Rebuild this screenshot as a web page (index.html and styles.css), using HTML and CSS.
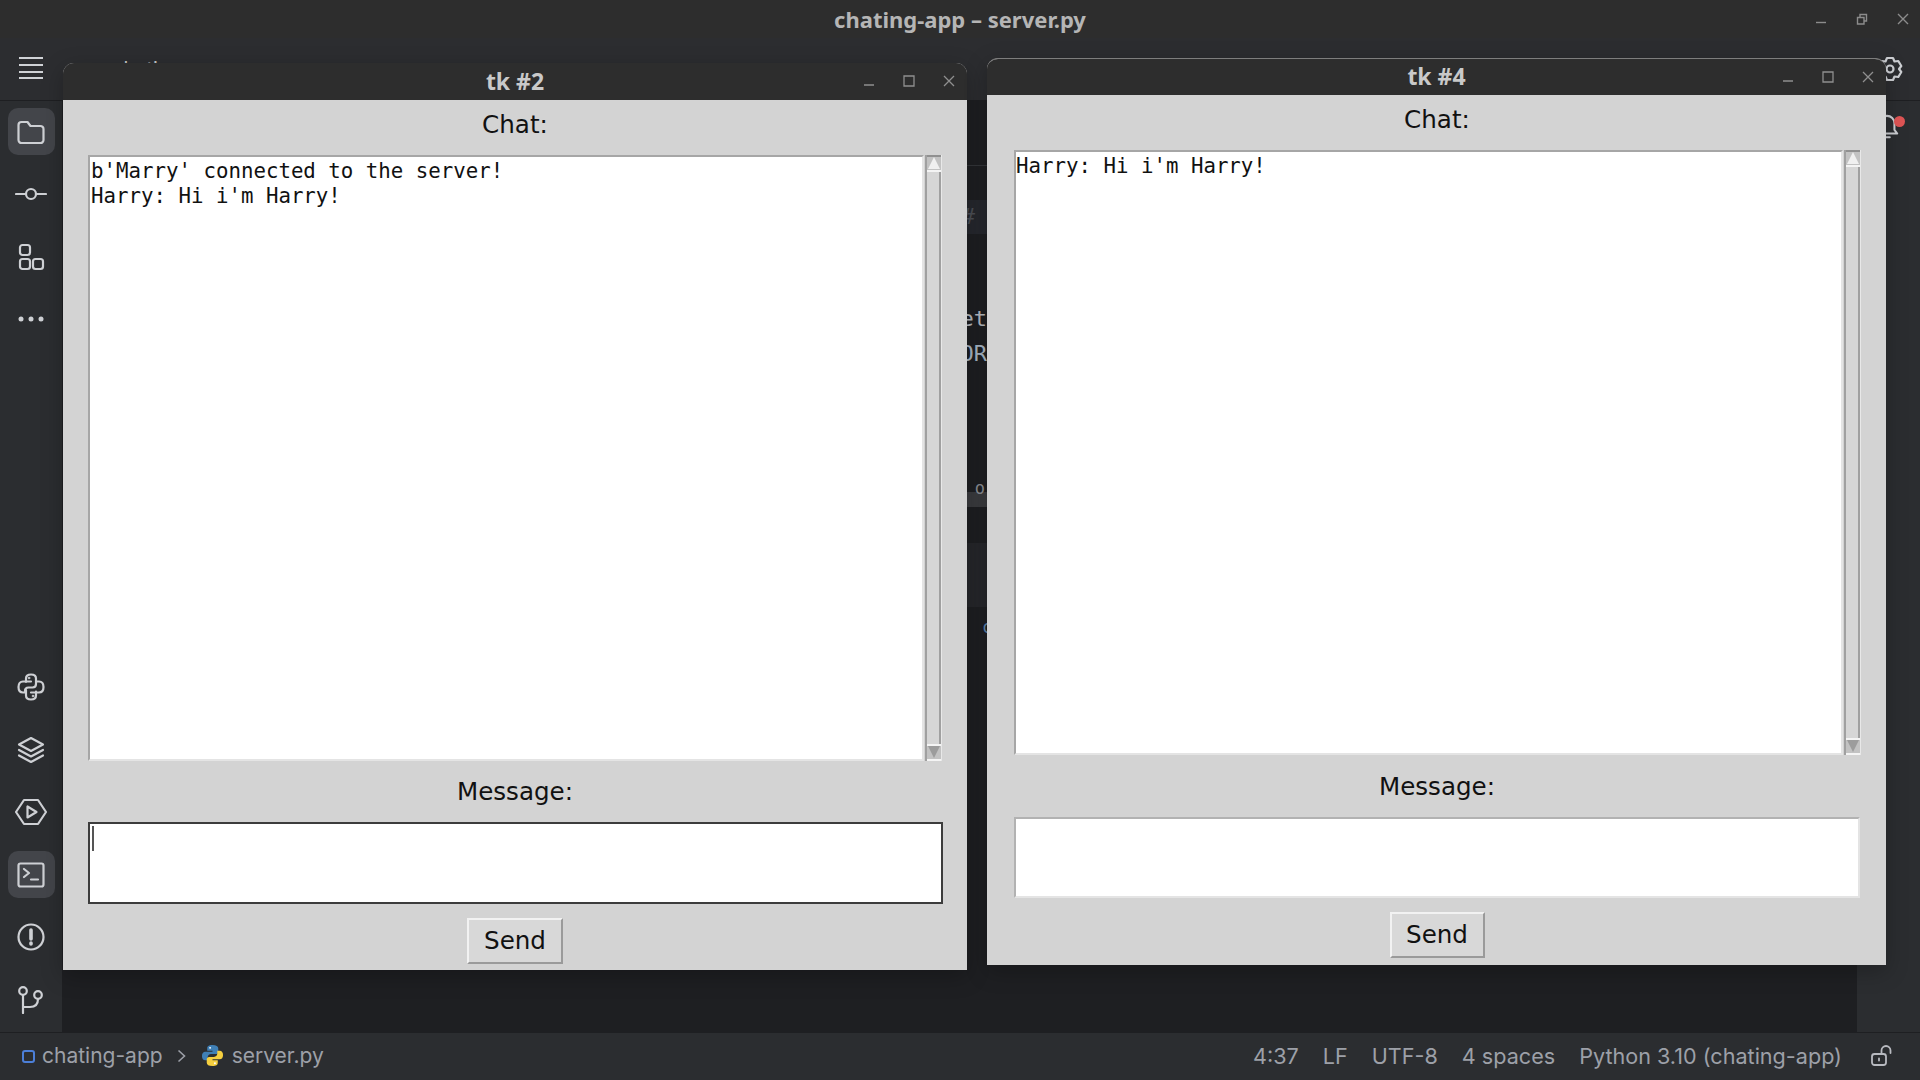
FILE: index.html
```html
<!DOCTYPE html>
<html lang="en">
<head>
<meta charset="UTF-8">
<meta name="viewport" content="width=device-width, initial-scale=1.0">
<title>chating-app – server.py</title>
<link rel="stylesheet" href="styles.css">
</head>
<body>
    <div class="ide">
        <header class="ide-head">
            <div class="title-row">
                <span class="ide-title">chating-app – server.py</span>
                <div class="ide-controls">
                    <svg width="12" height="12" viewBox="0 0 12 12"><path d="M1 9.500h10"/></svg>
                    <svg width="12" height="12" viewBox="0 0 12 12"><path d="M1.500 4.500h6.500v6.500h-6.500zM4 4.500v-3h6.500v6.500h-2.500"/></svg>
                    <svg width="12" height="12" viewBox="0 0 12 12"><path d="M1 1l10 10M11 1l-10 10"/></svg>
                </div>
            </div>
            <div class="tool-row">
                <div class="rail-slot">
                    <svg class="burger" width="26" height="24" viewBox="0 0 26 24"><path d="M1 2h24M1 9h24M1 16h24M1 22h24"/></svg>
                </div>
                <span class="tool-text">chating-app</span>
                <span class="tool-text">server</span>
                <div class="tool-right">
                    <svg class="ico small" viewBox="0 0 26 26"><path d="M13 3a9 9 0 1 0 .01 0"/></svg>
                    <svg class="ico small" viewBox="0 0 26 26"><path d="M13 3a9 9 0 1 0 .01 0"/></svg>
                    <svg class="ico small" viewBox="0 0 26 26"><path d="M10 2h6l1.500 3.500 3.800-.5 3 5-2.300 3 2.300 3-3 5-3.800-.5L16 24h-6l-1.500-3.500-3.800.5-3-5 2.300-3-2.300-3 3-5 3.800.5z"/><circle cx="13" cy="13" r="3.500"/></svg>
                </div>
            </div>
        </header>

        <div class="ide-main">
            <nav class="rail">
                <div class="rail-group">
                    <div class="rail-btn active">
                        <svg class="ico" viewBox="0 0 28 28"><path d="M1.500 7a3 3 0 0 1 3-3h6l3 4h10a3 3 0 0 1 3 3v11a3 3 0 0 1-3 3h-19a3 3 0 0 1-3-3z"/></svg>
                    </div>
                    <div class="rail-btn">
                        <svg class="ico wide" viewBox="0 0 32 28"><circle cx="16" cy="14" r="5"/><path d="M1 14h10M21 14h10"/></svg>
                    </div>
                    <div class="rail-btn">
                        <svg class="ico" viewBox="0 0 28 28"><rect x="3" y="2" width="10" height="10" rx="2.500"/><rect x="3" y="16" width="10" height="10" rx="2.500"/><rect x="16" y="16" width="10" height="10" rx="2.500"/></svg>
                    </div>
                    <div class="rail-btn">
                        <svg class="ico fill" viewBox="0 0 28 28"><circle cx="4" cy="14" r="2.500"/><circle cx="14" cy="14" r="2.500"/><circle cx="24" cy="14" r="2.500"/></svg>
                    </div>
                </div>
                <div class="rail-group">
                    <div class="rail-btn">
                        <svg class="ico" viewBox="0 0 28 28"><path d="M9 9V5.500c0-2.500 2.200-4 5-4s5 1.500 5 4V11c0 2-1.500 3.500-3.500 3.500h-4C9.500 14.500 8 16 8 18v1.500H6c-2.700 0-4.500-2.200-4.500-5.500S3.300 8.500 6 8.500h8"/><path d="M19 18.500V22.500c0 2.500-2.200 4-5 4s-5-1.500-5-4V17M20 8.500h2c2.700 0 4.500 2.200 4.500 5.500s-1.800 5.500-4.500 5.500h-8"/><circle class="dot" cx="12" cy="5" r="1"/><circle class="dot" cx="16" cy="23" r="1"/></svg>
                    </div>
                    <div class="rail-btn">
                        <svg class="ico" viewBox="0 0 28 28"><path d="M14 2l12 6.500L14 15 2 8.500zM2 14l12 6.500L26 14M2 19.500L14 26l12-6.500"/></svg>
                    </div>
                    <div class="rail-btn">
                        <svg class="ico wide" viewBox="0 0 32 28"><path d="M9 2h14l8 12-8 12H9L1 14z"/><path d="M12.500 8.500v11l9-5.500z"/></svg>
                    </div>
                    <div class="rail-btn active">
                        <svg class="ico" viewBox="0 0 28 28"><rect x="1.500" y="2.500" width="25" height="23" rx="2"/><path d="M7 8l5 4-5 4M14 18.500h7"/></svg>
                    </div>
                    <div class="rail-btn">
                        <svg class="ico" viewBox="0 0 28 28"><circle cx="14" cy="14" r="12.500"/><path class="thick" d="M14 7v9M14 20v1"/></svg>
                    </div>
                    <div class="rail-btn">
                        <svg class="ico" viewBox="0 0 28 28"><circle cx="6" cy="5" r="3.800"/><circle cx="21" cy="9" r="3.800"/><path d="M6 9v18M6 21h7c5 0 8-3 8-8"/></svg>
                    </div>
                </div>
            </nav>

            <main class="editor">
                <div class="peek">
                    <div class="peek-row gutter-line"></div>
                    <div class="peek-row caret-line">#</div>
                    <div class="peek-row code-a">et</div>
                    <div class="peek-row code-b">OR</div>
                    <div class="peek-row tab-o">o</div>
                    <div class="peek-row band"></div>
                    <div class="peek-row code-c">c</div>
                </div>
            </main>

            <aside class="right-rail">
                <div class="bell">
                    <svg class="ico small" viewBox="0 0 26 28"><path d="M13 2a8 8 0 0 0-8 8v7l-3 4h22l-3-4v-7a8 8 0 0 0-8-8zM10 25h6"/></svg>
                    <span class="bell-dot"></span>
                </div>
            </aside>
        </div>

        <footer class="status">
            <div class="crumbs">
                <span class="module-mark"></span>
                <span>chating-app</span>
                <svg class="crumb-sep" width="9" height="14" viewBox="0 0 9 14"><path d="M1.500 1.500L7.500 7l-6 5.500"/></svg>
                <svg class="py-logo" width="23" height="23" viewBox="0 0 24 24">
                    <path class="py-blue" d="M12 1C8 1 6.500 2.300 6.500 4.500V7H12v1H4.500C2.300 8 1 9.800 1 12.500S2.300 17 4.500 17H7v-3c0-2 1.500-3.500 3.500-3.500h5c1.500 0 2.500-1 2.500-2.500V4.500C18 2.500 16 1 12 1z"/>
                    <path class="py-yellow" d="M12 23c4 0 5.500-1.300 5.500-3.500V17H12v-1h7.500c2.200 0 3.500-1.800 3.500-4.500S21.700 7 19.500 7H17v3c0 2-1.500 3.500-3.500 3.500h-5C7 13.500 6 14.500 6 16v3.500C6 21.500 8 23 12 23z"/>
                    <circle class="py-eye" cx="9.500" cy="4" r="1"/><circle class="py-eye" cx="14.500" cy="20" r="1"/>
                </svg>
                <span>server.py</span>
            </div>
            <div class="status-right">
                <span>4:37</span>
                <span>LF</span>
                <span>UTF-8</span>
                <span>4 spaces</span>
                <span>Python 3.10 (chating-app)</span>
                <svg class="lock" width="22" height="22" viewBox="0 0 22 22"><rect x="1" y="9" width="14" height="11" rx="2.500"/><path d="M10.500 9V5.500a4.500 4.500 0 0 1 9 0V8M8 13.500v2"/></svg>
            </div>
        </footer>
    </div>

    <section class="tk-window win-a">
        <div class="tk-title">
            <span>tk #2</span>
            <div class="tk-controls">
                <svg width="12" height="12" viewBox="0 0 12 12"><path d="M1 10h10"/></svg>
                <svg width="12" height="12" viewBox="0 0 12 12"><path d="M1 1h10v10H1z"/></svg>
                <svg width="12" height="12" viewBox="0 0 12 12"><path d="M1 1l10 10M11 1L1 11"/></svg>
            </div>
        </div>
        <div class="tk-body">
            <div class="tk-label chat-label">Chat:</div>
            <div class="chat-row">
                <div class="chat-box">b'Marry' connected to the server!<br>Harry: Hi i'm Harry!</div>
                <div class="scrollbar">
                    <div class="arrow up"></div>
                    <div class="trough"></div>
                    <div class="arrow down"></div>
                </div>
            </div>
            <div class="tk-label msg-label">Message:</div>
            <div class="msg-input focused"><span class="caret"></span></div>
            <button class="send">Send</button>
        </div>
    </section>

    <section class="tk-window win-b">
        <div class="tk-title">
            <span>tk #4</span>
            <div class="tk-controls">
                <svg width="12" height="12" viewBox="0 0 12 12"><path d="M1 10h10"/></svg>
                <svg width="12" height="12" viewBox="0 0 12 12"><path d="M1 1h10v10H1z"/></svg>
                <svg width="12" height="12" viewBox="0 0 12 12"><path d="M1 1l10 10M11 1L1 11"/></svg>
            </div>
        </div>
        <div class="tk-body">
            <div class="tk-label chat-label">Chat:</div>
            <div class="chat-row">
                <div class="chat-box">Harry: Hi i'm Harry!</div>
                <div class="scrollbar">
                    <div class="arrow up"></div>
                    <div class="trough"></div>
                    <div class="arrow down"></div>
                </div>
            </div>
            <div class="tk-label msg-label">Message:</div>
            <div class="msg-input"></div>
            <button class="send">Send</button>
        </div>
    </section>
</body>
</html>
```

FILE: styles.css
```css
* {
    box-sizing: border-box;
}
html, body {
    margin: 0;
    height: 100%;
    overflow: hidden;
}
body {
    font-family: "Inter", "Liberation Sans", sans-serif;
    background-color: #1e1f22;
    position: relative;
}
svg path, svg circle, svg rect {
    fill: none;
    stroke: currentColor;
}

/* ide behind the windows */
.ide {
    display: flex;
    flex-direction: column;
    height: 1080px;
}
.ide-head {
    height: 101px;
    background: #2c2d30;
    border-bottom: 1px solid #1e1f22;
    flex: none;
}
.title-row {
    height: 38px;
    background: #2d2d2d;
    display: flex;
    align-items: center;
    justify-content: center;
    position: relative;
}
.ide-title {
    font-family: "Noto Sans", sans-serif;
    font-weight: 700;
    font-size: 22px;
    color: #b5b5b5;
}
.ide-controls {
    position: absolute;
    right: 11px;
    top: 13px;
    display: flex;
    gap: 29px;
    color: #8c8c8c;
}
.ide-controls svg path {
    stroke-width: 1.4;
}
.tool-row {
    height: 62px;
    display: flex;
    align-items: center;
}
.rail-slot {
    width: 62px;
    display: flex;
    justify-content: center;
}
.burger {
    color: #d0d2d6;
    margin: -2px 0 0 -1px;
}
.burger path {
    stroke-width: 2.200;
}
.tool-text {
    font-size: 20px;
    color: #c9c9c9;
    margin-left: 50px;
    margin-right: 21px;
}
.tool-right {
    margin-left: auto;
    display: flex;
    gap: 37px;
    padding-right: 17px;
}
.ico {
    width: 28px;
    height: 28px;
    color: #ced0d4;
    display: block;
}
.ico.wide {
    width: 32px;
}
.ico.small {
    width: 26px;
    height: 26px;
}
.ico path, .ico circle, .ico rect {
    stroke-width: 2.200;
    stroke-linejoin: round;
    stroke-linecap: round;
}
.ico .thick {
    stroke-width: 3.600;
}
.ico .dot {
    fill: currentColor;
    stroke-width: 0.500;
}
.ico.fill circle {
    fill: currentColor;
    stroke: none;
}

.ide-main {
    flex: 1;
    display: flex;
    min-height: 0;
}
.rail {
    width: 62px;
    flex: none;
    background: #2b2d30;
    display: flex;
    flex-direction: column;
    justify-content: space-between;
    padding: 7px 0 9px;
}
.rail-group {
    display: flex;
    flex-direction: column;
    gap: 15.500px;
    align-items: center;
}
.rail-btn {
    width: 47px;
    height: 47px;
    border-radius: 10px;
    display: flex;
    align-items: center;
    justify-content: center;
}
.rail-btn.active {
    background: #43454a;
}

.editor {
    flex: 1;
    background: #1e1f22;
    padding-left: 905px;
}
.peek {
    width: 20px;
    color: #8d9097;
    font-family: "DejaVu Sans Mono", monospace;
    font-size: 22px;
}
.peek-row {
    display: flex;
    justify-content: flex-end;
    white-space: nowrap;
}
.gutter-line {
    height: 1px;
    margin-top: 64px;
    background: #34363a;
}
.caret-line {
    height: 34px;
    margin-top: 34px;
    line-height: 34px;
    background: #26282e;
    color: #4d5057;
    padding-right: 12px;
}
.code-a {
    height: 28px;
    margin-top: 71px;
    line-height: 28px;
    color: #b9bcc1;
}
.code-b {
    height: 28px;
    margin-top: 7px;
    line-height: 28px;
    color: #a9b7c6;
}
.tab-o {
    height: 33px;
    margin-top: 109px;
    padding-right: 2px;
    line-height: 22px;
    font-size: 17px;
    color: #8b8e93;
    background: linear-gradient(#1e1f22 15px, #3b3c3f 15px, #3b3c3f 30px, #1e1f22 30px);
}
.band {
    height: 64px;
    margin-top: 33px;
    background: #26272b;
}
.code-c {
    height: 30px;
    margin-top: 5px;
    padding-left: 15px;
    justify-content: flex-start;
    line-height: 30px;
    font-size: 17px;
    color: #5c86b0;
}

.right-rail {
    width: 63px;
    flex: none;
    background: #2b2d30;
    display: flex;
    justify-content: flex-end;
    padding: 13px 20px 0 0;
}
.bell {
    position: relative;
    height: 28px;
}
.bell-dot {
    position: absolute;
    top: 2px;
    right: -5px;
    width: 11px;
    height: 11px;
    border-radius: 50%;
    background: #e05555;
}

.status {
    height: 48px;
    flex: none;
    background: #2b2d30;
    border-top: 1px solid #1e1f22;
    display: flex;
    align-items: center;
    justify-content: space-between;
    color: #9da0a8;
    padding: 0 27px 2px 22px;
}
.crumbs {
    display: flex;
    align-items: center;
    font-size: 21px;
}
.module-mark {
    width: 13px;
    height: 13px;
    border: 2px solid #4c7fd8;
    border-radius: 3px;
    margin-right: 7px;
    margin-top: 2px;
}
.crumb-sep {
    margin: 0 15px 0 14px;
    color: #9da0a8;
}
.crumb-sep path {
    stroke-width: 1.600;
}
.py-logo {
    margin-right: 8px;
}
.py-logo .py-blue {
    fill: #3f7fb5;
    stroke: none;
}
.py-logo .py-yellow {
    fill: #f5cf3f;
    stroke: none;
}
.py-logo .py-eye {
    fill: #fff;
    stroke: none;
}
.status-right {
    display: flex;
    align-items: center;
    gap: 24px;
    font-size: 21.600px;
}
.lock {
    margin-left: 5px;
    color: #b8bac0;
}
.lock rect, .lock path {
    stroke-width: 1.800;
    stroke-linecap: round;
}

/* tk windows float on top */
.tk-window {
    position: absolute;
    background: #d3d3d3;
    border-radius: 11px 11px 0 0;
    overflow: hidden;
    box-shadow: 0 6px 22px rgba(0, 0, 0, 0.25);
}
.win-a {
    left: 63px;
    top: 63px;
    width: 904px;
    height: 907px;
}
.win-b {
    left: 987px;
    top: 58px;
    width: 899px;
    height: 907px;
    border-top: 1px solid #7d7d7d;
}
.tk-title {
    height: 37px;
    background: #2d2d2d;
    color: #c9c9c9;
    display: flex;
    align-items: center;
    justify-content: center;
    position: relative;
    padding-bottom: 2px;
    font-family: "Noto Sans", sans-serif;
    font-weight: 700;
    font-size: 23px;
}
.win-b .tk-title {
    height: 36px;
}
.tk-controls {
    position: absolute;
    top: 12px;
    right: 12px;
    display: flex;
    gap: 28px;
    color: #8f8f8f;
}
.tk-controls path {
    stroke-width: 1.300;
}
.tk-body {
    display: flex;
    flex-direction: column;
    padding: 0 25px;
    font-family: "DejaVu Sans", sans-serif;
    color: #111;
}
.win-b .tk-body {
    padding: 0 26px 0 27px;
}
.tk-label {
    display: flex;
    align-items: center;
    justify-content: center;
    font-size: 24.600px;
}
.chat-label {
    height: 55px;
    padding-bottom: 7px;
}
.msg-label {
    height: 61px;
}
.win-b .msg-label {
    height: 62px;
}
.chat-row {
    display: flex;
    height: 606px;
    gap: 1px;
}
.win-b .chat-row {
    height: 605px;
    margin-right: -1px;
}
.chat-box {
    flex: 1;
    background: #fff;
    border-top: 2px solid #a6a6a6;
    border-left: 2px solid #a6a6a6;
    border-bottom: 2px solid #e4e4e4;
    border-right: 2px solid #e4e4e4;
    font-family: "DejaVu Sans Mono", monospace;
    font-size: 20.750px;
    line-height: 24.700px;
    padding: 2px 0 0 1px;
    white-space: pre;
}
.win-b .chat-box {
    padding-left: 0;
}
.scrollbar {
    width: 17px;
    display: flex;
    flex-direction: column;
    background: #d8d8d8;
    border-left: 2px solid #a0a0a0;
    border-right: 1px solid #e8e8e8;
}
.arrow {
    height: 17px;
    flex: none;
    position: relative;
    background: #c2c2c2;
}
.arrow::after {
    content: "";
    position: absolute;
    left: 1px;
    border-left: 6.500px solid transparent;
    border-right: 6.500px solid transparent;
}
.arrow.up {
    border-top: 2px solid #909090;
    border-bottom: 2px solid #f4f4f4;
}
.arrow.up::after {
    top: 0;
    border-bottom: 12px solid #f0f0f0;
}
.arrow.down {
    border-top: 2px solid #f4f4f4;
    border-bottom: 2px solid #f4f4f4;
}
.arrow.down::after {
    top: 0;
    border-top: 12px solid #9c9c9c;
}
.trough {
    flex: 1;
    border-right: 2px solid #a0a0a0;
    background: #d6d6d6;
}
.msg-input {
    height: 82px;
    background: #fff;
    border-top: 2px solid #b2b2b2;
    border-left: 2px solid #b2b2b2;
    border-bottom: 2px solid #e4e4e4;
    border-right: 2px solid #e4e4e4;
    position: relative;
}
.win-b .msg-input {
    height: 81px;
}
.msg-input.focused {
    border: 2px solid #3c3c3c;
    margin-right: -1px;
}
.caret {
    position: absolute;
    left: 2px;
    top: 2px;
    width: 2px;
    height: 25px;
    background: #555;
}
.send {
    align-self: center;
    width: 96px;
    height: 46px;
    margin-top: 14px;
    padding: 0 0 2px;
    background: #d8d8d8;
    border-top: 2px solid #f2f2f2;
    border-left: 2px solid #f2f2f2;
    border-bottom: 2px solid #9a9a9a;
    border-right: 2px solid #9a9a9a;
    font-family: "DejaVu Sans", sans-serif;
    font-size: 24.600px;
    color: #111;
}
.win-b .send {
    width: 95px;
}
```
